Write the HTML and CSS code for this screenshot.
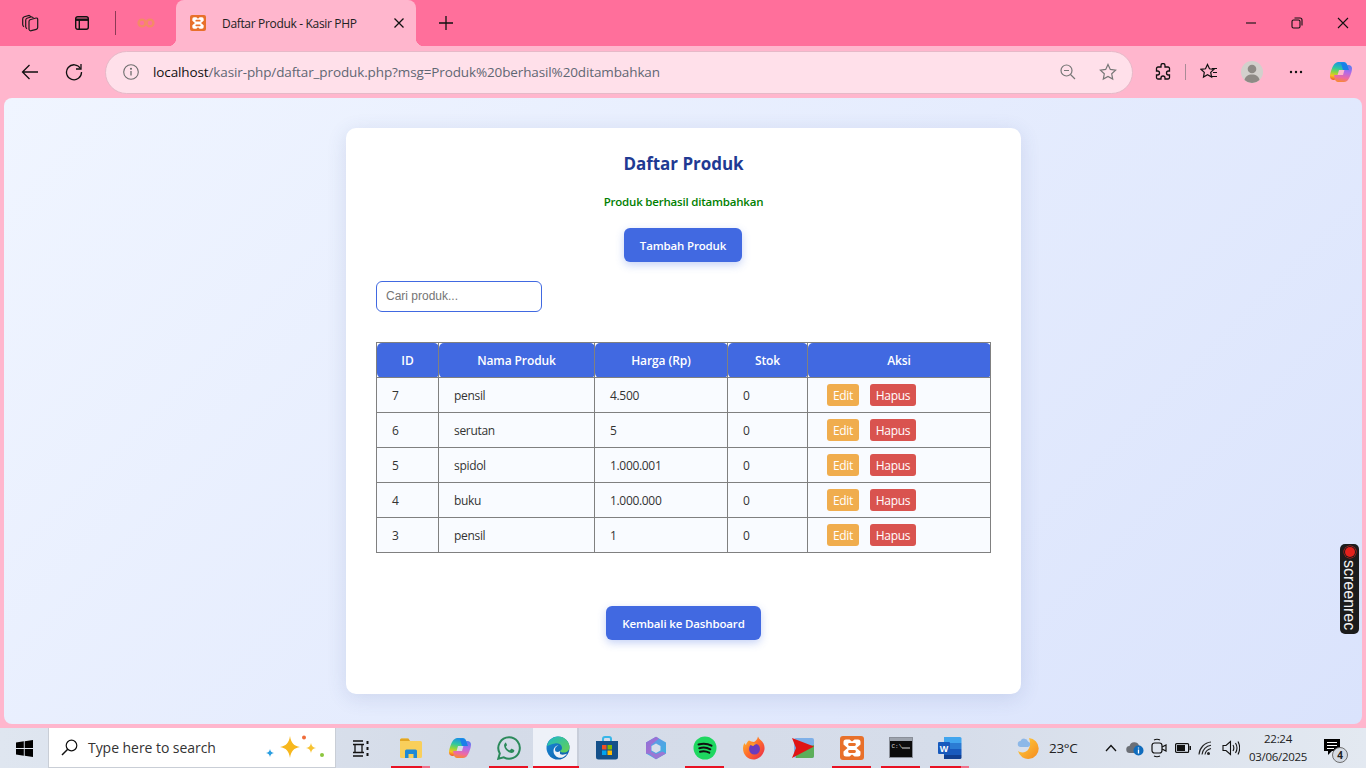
FILE: index.html
```html
<!DOCTYPE html>
<html lang="id">
<head>
<meta charset="utf-8">
<title>Daftar Produk - Kasir PHP</title>
<link rel="stylesheet" href="styles.css">
</head>
<body>
<div class="tabbar">
  <span class="slot s-coll"><svg width="20" height="20" viewBox="0 0 20 20" fill="none" stroke="#1a1a1a" stroke-width="1.200"><path d="M11 3.800L9 2.300 4.300 3.700Q2.700 4.300 2.700 6v5.500q0 1.500 1.300 2.300"/><path d="M13.500 4.800L11.500 3.800 7 5.300Q5.700 5.800 5.700 7.200v6.300q0 1.500 1.300 2.200"/><path d="M10 6.800l6-1.800q1.700-.2 1.700 1.500v8q0 1.400-1.400 1.800l-5 1.400q-1.800.4-2.300-1.300V8.500q0-1.200 1-1.700z"/></svg></span>
  <span class="slot s-vert"><svg width="16" height="16" viewBox="0 0 16 16" fill="none" stroke="#111" stroke-width="1.400"><rect x="1.700" y="1.700" width="12.600" height="12.600" rx="2"/><path d="M1.700 4.700h12.600" stroke-width="2.400"/><path d="M5.300 5v9"/></svg></span>
  <span class="tabsep"></span>
  <span class="slot s-inactive"><svg width="18" height="10" viewBox="0 0 18 10" fill="none" stroke="#f58a66" stroke-width="2.400"><circle cx="5" cy="5" r="3.400"/><circle cx="13" cy="5" r="3.400"/></svg></span>
  <div class="tab">
    <svg class="favicon" width="16" height="16" viewBox="0 0 24 24"><rect width="24" height="24" rx="3" fill="#e8702a"/><path d="M6 3.500h3.500L12 5.500l2.500-2H18A2.500 2.500 0 0 1 20.500 6v2.500L16.500 12l4 3.500V18a2.500 2.500 0 0 1-2.500 2.500h-3.500l-2.500-2-2.500 2H6A2.500 2.500 0 0 1 3.500 18v-2.500l4-3.500-4-3.500V6A2.500 2.500 0 0 1 6 3.500z" fill="#fff"/><path d="M9.500 8.500h5M9.500 15.500h5" stroke="#e8702a" stroke-width="2.800" stroke-linecap="round"/></svg>
    <span class="tabtitle">Daftar Produk - Kasir PHP</span>
    <svg class="tabclose" width="12" height="12" viewBox="0 0 12 12" stroke="#111" stroke-width="1.300"><path d="M1.500 1.500l9 9M10.500 1.500l-9 9"/></svg>
  </div>
  <span class="slot s-plus"><svg width="16" height="16" viewBox="0 0 16 16" stroke="#111" stroke-width="1.300"><path d="M8 1v14M1 8h14"/></svg></span>
  <span class="spacer"></span>
  <span class="slot s-win"><svg width="12" height="12" viewBox="0 0 12 12" stroke="#111" stroke-width="1.100"><path d="M1 6h10"/></svg></span>
  <span class="slot s-win"><svg width="12" height="12" viewBox="0 0 12 12" fill="none" stroke="#111" stroke-width="1.100"><rect x="1" y="3" width="8" height="8" rx="1.500"/><path d="M3.500 1h5.500a2 2 0 0 1 2 2v5.500"/></svg></span>
  <span class="slot s-win"><svg width="12" height="12" viewBox="0 0 12 12" stroke="#111" stroke-width="1.100"><path d="M1 1l10 10M11 1L1 11"/></svg></span>
</div>
<div class="toolbar">
  <span class="slot t-back"><svg width="18" height="18" viewBox="0 0 18 18" fill="none" stroke="#111" stroke-width="1.300"><path d="M17 9H1.500M8.500 2L1.500 9l7 7"/></svg></span>
  <span class="slot t-reload"><svg width="18" height="18" viewBox="0 0 18 18" fill="none" stroke="#111" stroke-width="1.300"><path d="M15.500 5.500A7.500 7.500 0 1 0 16.500 9"/><path d="M16 1v5h-5"/></svg></span>
  <div class="address">
    <svg class="info" width="16" height="16" viewBox="0 0 16 16" fill="none" stroke="#6e6e6e" stroke-width="1.100"><circle cx="8" cy="8" r="7.300"/><path d="M8 7v4.500" stroke-width="1.300"/><circle cx="8" cy="4.700" r=".5" fill="#6e6e6e"/></svg>
    <span class="url"><span class="host">localhost</span>/kasir-php/daftar_produk.php?msg=Produk%20berhasil%20ditambahkan</span>
    <span class="spacer"></span>
    <svg class="a-zoom" width="16" height="16" viewBox="0 0 16 16" fill="none" stroke="#777" stroke-width="1.200"><circle cx="6.500" cy="6.500" r="5.500"/><path d="M10.500 10.500L15 15M4 6.500h5"/></svg>
    <svg class="a-star" width="18" height="18" viewBox="0 0 18 18" fill="none" stroke="#777" stroke-width="1.200"><path d="M9 1.500l2.300 4.900 5.300.7-3.900 3.700 1 5.300L9 13.500l-4.700 2.600 1-5.300L1.400 7.100l5.300-.7z"/></svg>
  </div>
  <span class="slot t-ext"><svg width="18" height="18" viewBox="0 0 18 18" fill="none" stroke="#111" stroke-width="1.300"><path d="M7 2.500a2 2 0 0 1 4 0V4h3a1.500 1.500 0 0 1 1.500 1.500V8h-1a2 2 0 0 0 0 4h1v2.500A1.500 1.500 0 0 1 14 16h-3v-1a2 2 0 0 0-4 0v1H4a1.500 1.500 0 0 1-1.500-1.500V12h1a2 2 0 0 0 0-4h-1V5.500A1.500 1.500 0 0 1 4 4h3z"/></svg></span>
  <span class="toolsep"></span>
  <span class="slot t-fav"><svg width="18" height="18" viewBox="0 0 18 18" fill="none" stroke="#111" stroke-width="1.200"><path d="M7.500 1.500l2 4.300 4.500.5-3.300 3.100.9 4.600-4.100-2.300-4 2.300.8-4.600L1 6.300l4.500-.5z"/><path d="M12 5.500h5M13 9.500h4M12 13.500h5"/></svg></span>
  <span class="slot t-avatar"><svg width="22" height="22" viewBox="0 0 22 22"><circle cx="11" cy="11" r="11" fill="#d3d0cc"/><circle cx="11" cy="8" r="4.300" fill="#8e8a85"/><path d="M3.500 19c.5-3.500 3.500-5.500 7.500-5.500s7 2 7.500 5.500a11 11 0 0 1-15 0z" fill="#8e8a85"/></svg></span>
  <span class="slot t-dots"><svg width="14" height="4" viewBox="0 0 14 4" fill="#111"><circle cx="2" cy="2" r="1.200"/><circle cx="7" cy="2" r="1.200"/><circle cx="12" cy="2" r="1.200"/></svg></span>
  <span class="slot t-copilot"><svg width="24" height="24" viewBox="0 0 24 24"><defs><linearGradient id="cpa" x1=".5" y1="0" x2=".3" y2="1"><stop offset="0" stop-color="#1a8fe8"/><stop offset=".35" stop-color="#2fc7a0"/><stop offset=".6" stop-color="#8ed63e"/><stop offset=".8" stop-color="#f9c31f"/><stop offset="1" stop-color="#f2602e"/></linearGradient><linearGradient id="cpb" x1=".6" y1="0" x2=".4" y2="1"><stop offset="0" stop-color="#5a7cf0"/><stop offset=".4" stop-color="#b36ae8"/><stop offset=".75" stop-color="#f06aa0"/><stop offset="1" stop-color="#f78a35"/></linearGradient></defs><path d="M9 2h6c1.500 0 2.500 1 3 2.500L20 10H10L8 17c-.4 1.500-1.500 3-3.500 3C2.500 20 1 18.500 1 16.500c0-4 3-12 5-13C7 2.500 8 2 9 2z" fill="url(#cpa)"/><path d="M15 22H9c-1.500 0-2.500-1-3-2.500L5 15h9l2-7c.4-1.500 1.500-3 3.500-3C21.500 5 23 6.500 23 8.500c0 4-3 11-5 12.500-1 .7-2 1-3 1z" fill="url(#cpb)"/><path d="M12 3h3l3 1.500 2 5.500h-6z" fill="#1b7fe8"/></svg></span>
</div>
<main class="content">
  <section class="card">
    <h2 class="title">Daftar Produk</h2>
    <p class="msg">Produk berhasil ditambahkan</p>
    <div class="center"><a class="btn btn-add">Tambah Produk</a></div>
    <input class="search" type="text" placeholder="Cari produk...">
    <table class="table">
      <colgroup><col class="c1"><col class="c2"><col class="c3"><col class="c4"><col class="c5"></colgroup>
      <thead><tr><th>ID</th><th>Nama Produk</th><th>Harga (Rp)</th><th>Stok</th><th>Aksi</th></tr></thead>
      <tbody>
        <tr><td>7</td><td>pensil</td><td>4.500</td><td>0</td><td><div class="acts"><a class="act edit">Edit</a><a class="act del">Hapus</a></div></td></tr>
        <tr><td>6</td><td>serutan</td><td>5</td><td>0</td><td><div class="acts"><a class="act edit">Edit</a><a class="act del">Hapus</a></div></td></tr>
        <tr><td>5</td><td>spidol</td><td>1.000.001</td><td>0</td><td><div class="acts"><a class="act edit">Edit</a><a class="act del">Hapus</a></div></td></tr>
        <tr><td>4</td><td>buku</td><td>1.000.000</td><td>0</td><td><div class="acts"><a class="act edit">Edit</a><a class="act del">Hapus</a></div></td></tr>
        <tr><td>3</td><td>pensil</td><td>1</td><td>0</td><td><div class="acts"><a class="act edit">Edit</a><a class="act del">Hapus</a></div></td></tr>
      </tbody>
    </table>
    <div class="center back"><a class="btn btn-back">Kembali ke Dashboard</a></div>
  </section>
  <div class="screenrec"><span class="recdot"></span><span class="rectext">screenrec</span></div>
</main>
<footer class="taskbar">
  <span class="tb-start"><svg width="17" height="17" viewBox="0 0 17 17" fill="#000"><path d="M0 2.400L7.800 1.300V8H0zM8.700 1.200L17 0v8H8.700zM0 9h7.800v6.700L0 14.600zM8.700 9H17v8l-8.300-1.200z"/></svg></span>
  <div class="searchbox">
    <svg width="17" height="17" viewBox="0 0 17 17" fill="none" stroke="#111" stroke-width="1.200"><circle cx="10.500" cy="6.500" r="5.300"/><path d="M6.700 10.300L1 16" stroke-width="1.500"/></svg>
    <span class="searchtext">Type here to search</span>
    <span class="spacer"></span>
    <svg width="62" height="26" viewBox="0 0 62 26"><path d="M26 1c1 7 4 10 10 11-6 1-9 4-10 11-1-7-4-10-10-11 6-1 9-4 10-11z" fill="#f7b71d"/><path d="M47 8c.5 3 2 4.500 5 5-3 .5-4.500 2-5 5-.5-3-2-4.500-5-5 3-.5 4.500-2 5-5z" fill="#f7c331"/><circle cx="40" cy="2.500" r="2" fill="#ef6c3a"/><circle cx="58" cy="20" r="2" fill="#8cc63f"/><path d="M6 14c.4 2.500 1.500 3.500 4 4-2.500.5-3.600 1.500-4 4-.4-2.500-1.500-3.500-4-4 2.500-.5 3.600-1.500 4-4z" fill="#2a9ee0"/></svg>
  </div>
  <span class="tb first"><svg width="18" height="17" viewBox="0 0 18 17" fill="none" stroke="#111" stroke-width="1.300"><path d="M1 1h10M1 16h10M3 4.500h7v8H3zM1 4.500h11M1 12.500h11"/><path d="M15.500 1v3M15.500 7v3M15.500 13v3" stroke-width="2"/></svg></span>
  <span class="tb run part"><svg width="22" height="20" viewBox="0 0 22 20"><path d="M0 2a1.500 1.500 0 0 1 1.500-1.500h6L10 3h10.500A1.500 1.500 0 0 1 22 4.500v14a1.500 1.500 0 0 1-1.500 1.500h-19A1.500 1.500 0 0 1 0 18.500z" fill="#f9cf5b"/><path d="M0 3h10l-1.500-2.500h-7A1.500 1.500 0 0 0 0 2z" fill="#e2a523"/><path d="M5 20v-7a1.500 1.500 0 0 1 1.500-1.500h9A1.500 1.500 0 0 1 17 13v7h-3.500v-4h-5v4z" fill="#1f8ad6"/></svg></span>
  <span class="tb"><svg width="24" height="24" viewBox="0 0 24 24"><path d="M9 2h6c1.500 0 2.500 1 3 2.500L20 10H10L8 17c-.4 1.500-1.500 3-3.500 3C2.500 20 1 18.500 1 16.500c0-4 3-12 5-13C7 2.500 8 2 9 2z" fill="url(#cpa)"/><path d="M15 22H9c-1.500 0-2.500-1-3-2.500L5 15h9l2-7c.4-1.500 1.500-3 3.500-3C21.500 5 23 6.500 23 8.500c0 4-3 11-5 12.500-1 .7-2 1-3 1z" fill="url(#cpb)"/><path d="M12 3h3l3 1.500 2 5.500h-6z" fill="#1b7fe8"/></svg></span>
  <span class="tb run"><svg width="24" height="24" viewBox="0 0 24 24"><path d="M12 1.300A10.700 10.700 0 0 0 2.800 17.400L1.300 22.700l5.500-1.400A10.700 10.700 0 1 0 12 1.300z" fill="none" stroke="#2b8a5b" stroke-width="2"/><path d="M8.700 6.800c-.8.300-1.800 1.500-1.600 3 .4 3.300 3.800 6.800 7.200 7.200 1.500.1 2.700-.9 2.900-1.700.2-.7.100-1.200-.1-1.400l-2.200-1.100c-.4-.1-.6 0-.9.300l-.8 1c-.3.200-.5.200-.8.100-1.400-.6-2.700-1.800-3.400-3.200-.1-.3 0-.5.200-.7l.6-.8c.2-.3.200-.5.100-.8l-.9-2c-.2-.3-.7-.4-1.300-.2z" fill="#2b8a5b"/></svg></span>
  <span class="tb run active"><svg width="24" height="24" viewBox="0 0 24 24"><defs><linearGradient id="eda" x1="0" y1="0" x2="1" y2="1"><stop offset="0" stop-color="#1bb8c9"/><stop offset="1" stop-color="#67d24f"/></linearGradient><linearGradient id="edb" x1="0" y1="0" x2="1" y2="1"><stop offset="0" stop-color="#1b8cd8"/><stop offset="1" stop-color="#0c5aa6"/></linearGradient></defs><circle cx="12" cy="12" r="11.500" fill="url(#edb)"/><path d="M1 10C2.500 4 7 .5 12 .5c6.500 0 11.500 5 11.500 10.500 0 3.500-2.500 5.500-5.500 5.500-2 0-3.500-.5-4-1.500 2-1 2.500-3 1.500-5C14.500 8 12 7 9 7.500 5.500 8 2.500 9.500 1 10z" fill="url(#eda)"/><path d="M14 15c-1.500 1.500-5 1.500-5-1.500 0-2 1.500-3.500 3.500-4-2.500 0-5 2-5 5.500 0 4.500 4.500 8 9 6.500 2-.7 3.800-2.300 4.500-4-1.500 1-4.500 1.500-6.500.8-.8-.3-.5-2-.5-2.800z" fill="#eef1f8"/></svg></span>
  <span class="tb"><svg width="24" height="24" viewBox="0 0 24 24"><path d="M8 5V3a2 2 0 0 1 2-2h4a2 2 0 0 1 2 2v2" fill="none" stroke="#38b6e8" stroke-width="2"/><path d="M1 5h22v16a2.500 2.500 0 0 1-2.500 2.500h-17A2.500 2.500 0 0 1 1 21z" fill="#14508a"/><rect x="7" y="9" width="4.500" height="4.500" fill="#f25022"/><rect x="12.500" y="9" width="4.500" height="4.500" fill="#7fba00"/><rect x="7" y="14.500" width="4.500" height="4.500" fill="#00a4ef"/><rect x="12.500" y="14.500" width="4.500" height="4.500" fill="#ffb900"/></svg></span>
  <span class="tb"><svg width="24" height="24" viewBox="0 0 24 24"><defs><linearGradient id="mfa" x1="0" y1="0" x2="1" y2="1"><stop offset="0" stop-color="#6f8fe8"/><stop offset="1" stop-color="#38b5e0"/></linearGradient><linearGradient id="mfb" x1="0" y1="0" x2="1" y2="1"><stop offset="0" stop-color="#8a72d8"/><stop offset="1" stop-color="#b36fd0"/></linearGradient></defs><path d="M12 .8l10 5.700v11L12 23.200 2 17.500v-11z" fill="url(#mfa)"/><path d="M2 6.500L12 .8l3 1.800L7 9v9l-5-.5z" fill="url(#mfb)"/><path d="M12 23.200l10-5.700-3.500-2L12 18l-5-2.500-3 1.500z" fill="#9a78d4"/><path d="M12 7.500l4.500 2.500v4.500L12 17l-4.500-2.500V10z" fill="#d8deea"/></svg></span>
  <span class="tb run"><svg width="24" height="24" viewBox="0 0 24 24"><circle cx="12" cy="12" r="11.500" fill="#1ed760"/><path d="M5.500 8.500c4.500-1.300 9-1 13 1.200M6.300 12.200c3.800-1 7.800-.7 11 1.100M7 15.700c3.200-.8 6.400-.6 9.300 1" fill="none" stroke="#111" stroke-width="2" stroke-linecap="round"/></svg></span>
  <span class="tb"><svg width="24" height="24" viewBox="0 0 24 24"><defs><linearGradient id="ffa" x1="0" y1="0" x2="1" y2="1"><stop offset="0" stop-color="#ffc52e"/><stop offset=".5" stop-color="#ff6a2b"/><stop offset="1" stop-color="#e8264f"/></linearGradient></defs><path d="M16 .5c1 3 4 4 5.500 7 1.500 3 1.500 7-.5 10-2 3.500-5.500 6-9.500 6C6 23.500 1 19 1 12.500c0-2 .5-4 1.500-5.500.3 1 .8 1.500 1.500 2 .5-2 1.500-3.500 3-4.500 1.500 1 3 1 5 1.500 1.500-1 3.500-2.500 4-5.500z" fill="url(#ffa)"/><circle cx="12.500" cy="13" r="5.500" fill="#6b3bbd"/><path d="M8 8c2-1.500 5-1.500 7 0-2 0-3 1-3.500 2-1 0-2.500-.5-3.500-2z" fill="#ff9a2b"/></svg></span>
  <span class="tb"><svg width="24" height="22" viewBox="0 0 24 22"><rect x="3" y="1" width="20" height="20" rx="2" fill="#7fb0e8"/><path d="M5 12l18-4v11a2 2 0 0 1-2 2H5z" fill="#5cae5a"/><path d="M1 1l22 8.500L1 21l4-10z" fill="#e01515"/></svg></span>
  <span class="tb run"><svg width="24" height="24" viewBox="0 0 24 24"><rect width="24" height="24" rx="3" fill="#e8702a"/><path d="M6 3.500h3.500L12 5.500l2.500-2H18A2.500 2.500 0 0 1 20.500 6v2.500L16.500 12l4 3.500V18a2.500 2.500 0 0 1-2.500 2.500h-3.500l-2.500-2-2.500 2H6A2.500 2.500 0 0 1 3.500 18v-2.500l4-3.500-4-3.500V6A2.500 2.500 0 0 1 6 3.500z" fill="#fff"/><path d="M9.500 8.500h5M9.500 15.500h5" stroke="#e8702a" stroke-width="2.800" stroke-linecap="round"/></svg></span>
  <span class="tb run"><svg width="24" height="22" viewBox="0 0 24 22"><rect x=".5" y=".5" width="23" height="20" fill="#0c0c0c" stroke="#8a8f99"/><rect x="1" y="1" width="22" height="3" fill="#9da3ad"/><text x="2.500" y="11" class="cmdtext">C:\</text><path d="M13 11h8" stroke="#ddd" stroke-width="1"/></svg></span>
  <span class="tb run part"><svg width="24" height="24" viewBox="0 0 24 24"><path d="M6 1h16a1.500 1.500 0 0 1 1.500 1.500V7H6z" fill="#41a5ee"/><rect x="6" y="7" width="17.500" height="6" fill="#2b7cd3"/><rect x="6" y="13" width="17.500" height="6" fill="#185abd"/><path d="M6 19h17.500v2.500A1.500 1.500 0 0 1 22 23H6z" fill="#103f91"/><rect y="6" width="12" height="12" rx="1" fill="#185abd"/><text x="6" y="15.500" class="wordtext">W</text></svg></span>
  <span class="spacer"></span>
  <span class="tray t-weather"><svg width="24" height="24" viewBox="0 0 24 24"><defs><linearGradient id="mn" x1="0" y1="0" x2="1" y2="1"><stop offset="0" stop-color="#ffd23f"/><stop offset="1" stop-color="#f58a1f"/></linearGradient></defs><path d="M13 2a10.500 10.500 0 1 1-11 13c2 1.500 5 2 8 .5 4-2 5-8 3-13.500z" fill="url(#mn)"/><path d="M5 11a3 3 0 0 1-.5-6A4 4 0 0 1 12 5.500 2.800 2.800 0 0 1 12 11z" fill="#8db8e8"/></svg></span>
  <span class="temp">23°C</span>
  <span class="tray t-chev"><svg width="12" height="8" viewBox="0 0 12 8" fill="none" stroke="#111" stroke-width="1.300"><path d="M1 7l5-5.500L11 7"/></svg></span>
  <span class="tray t-icon"><svg width="18" height="16" viewBox="0 0 18 16"><path d="M4 13a3.500 3.500 0 0 1-.5-7A5 5 0 0 1 13 5.500 3.800 3.800 0 0 1 13 13z" fill="#6b6f76"/><circle cx="12.500" cy="10.500" r="5" fill="#0f6cbd"/><path d="M12.500 9.500v4M12.500 7.500v1" stroke="#fff" stroke-width="1.300"/></svg></span>
  <span class="tray t-icon"><svg width="18" height="20" viewBox="0 0 18 20" fill="none" stroke="#111" stroke-width="1.200"><rect x="2" y="5" width="10" height="10" rx="2.500"/><path d="M12 9l4-2v6l-4-2M4 2c2-1 4-1 6 0M4 18c2 1 4 1 6 0"/></svg></span>
  <span class="tray t-icon"><svg width="16" height="10" viewBox="0 0 16 10"><rect x=".6" y=".6" width="13" height="8.800" rx="1" fill="none" stroke="#111" stroke-width="1.200"/><rect x="2" y="2" width="8" height="6" fill="#111"/><rect x="14.500" y="3" width="1.500" height="4" fill="#111"/></svg></span>
  <span class="tray t-icon"><svg width="18" height="15" viewBox="0 0 18 15" fill="none" stroke="#222" stroke-width="1.100"><path d="M1 13.500C1.500 7 6.500 1.500 13 1M4 13.500C4.500 9 8 5 13 4.300M7 13.500c.3-2.600 2.500-5 6-6"/><circle cx="10.500" cy="12.500" r="1.500" fill="#222" stroke="none"/></svg></span>
  <span class="tray t-icon"><svg width="18" height="16" viewBox="0 0 18 16" fill="none" stroke="#111" stroke-width="1.100"><path d="M1 5.500h3L8.500 1.500v13L4 10.500H1zM11 5c1 1.800 1 4.200 0 6M13.500 3c1.800 3 1.800 7 0 10M16 1.500c2 3.800 2 9.200 0 13"/></svg></span>
  <div class="clock"><span>22:24</span><span>03/06/2025</span></div>
  <span class="notif"><svg width="18" height="17" viewBox="0 0 18 17"><path d="M0 0h16v12H8l-4 4v-4H0z" fill="#000"/><path d="M3 3.500h10M3 6.500h10M3 9.500h7" stroke="#fff" stroke-width="1"/></svg><span class="badge">4</span></span>
</footer>
</body>
</html>
```
FILE: styles.css
```css
* { box-sizing: border-box; }
html, body { margin: 0; padding: 0; height: 768px; overflow: hidden; }
body {
  width: 1366px;
  display: flex;
  flex-direction: column;
  font-family: "Open Sans", "Noto Sans", sans-serif;
  background: #ffb6cd;
  color: #1a1a1a;
}
.slot { display: flex; align-items: center; justify-content: center; flex: none; }
.spacer { flex: 1; }

/* tab strip */
.tabbar { height: 46px; flex: none; display: flex; align-items: center; background: #ff6f9b; }
.s-coll { width: 60px; height: 46px; }
.s-vert { width: 44px; height: 46px; }
.tabsep { width: 1px; height: 24px; background: #8c3a55; margin: 0 0 0 11px; flex: none; }
.s-inactive { width: 60px; height: 46px; }
.tab {
  position: relative; width: 240px; height: 46px; flex: none;
  display: flex; align-items: center; background: #ffb6cd;
  border-radius: 8px 8px 0 0; padding: 0 0 0 14px;
}
.tab::before, .tab::after {
  content: ""; position: absolute; bottom: 0; width: 8px; height: 8px;
}
.tab::before { left: -8px; background: radial-gradient(circle at 0 0, #ff6f9b 8px, #ffb6cd 8.500px); }
.tab::after { right: -8px; background: radial-gradient(circle at 100% 0, #ff6f9b 8px, #ffb6cd 8.500px); }
.favicon { flex: none; }
.tabtitle { margin-left: 16px; font-size: 12px; width: 165px; white-space: nowrap; letter-spacing: -.33px; color: #222; }
.tabclose { margin-left: 6px; }
.s-plus { width: 60px; height: 46px; }
.s-win { width: 46px; height: 46px; }

/* toolbar */
.toolbar { height: 52px; flex: none; display: flex; align-items: center; background: #ffb6cd; }
.t-back { width: 52px; margin-left: 4px; }
.t-reload { width: 36px; }
.address {
  width: 1028px; height: 43px; margin-left: 13px; flex: none;
  display: flex; align-items: center;
  background: #ffe0ea; border: 1px solid #e6b9c8; border-radius: 22px; padding: 0 15px 0 17px;
}
.info { flex: none; }
.url { margin-left: 14px; font-size: 13.500px; white-space: nowrap; color: #5f6773; letter-spacing: -.12px; }
.host { color: #111; }
.a-zoom { margin-right: 23px; }
.t-ext { width: 36px; margin-left: 12px; }
.toolsep { width: 1px; height: 16px; background: #a98b96; margin: 0 6px 0 4px; flex: none; }
.t-fav { width: 34px; }
.t-avatar { width: 50px; margin-left: 1px; }
.t-dots { width: 38px; }
.t-copilot { width: 50px; margin-left: 1px; }

/* page */
.content {
  position: relative; flex: none; height: 626px; margin: 0 4px; padding-top: 30px;
  border-radius: 8px;
  background: linear-gradient(135deg, #f0f5ff 0%, #dae3fc 100%);
  overflow: hidden;
}
.card {
  width: 675px; height: 566px; margin: 0 auto 0 342px; padding: 24px 30px 0;
  background: #fff; border-radius: 10px;
  box-shadow: 0 4px 20px rgba(60, 80, 140, .14);
}
.title { margin: 0; height: 24px; line-height: 24px; text-align: center; font-size: 17px; font-weight: 700; color: #1f3a93; letter-spacing: -.03px; }
.msg { margin: 17px 0 0; height: 17px; line-height: 17px; text-align: center; font-size: 11.500px; font-weight: 600; color: #008000; letter-spacing: -.2px; }
.center { display: flex; justify-content: center; margin-top: 18px; }
.back { margin-top: 53px; }
.btn {
  display: flex; align-items: center; justify-content: center; height: 34px;
  background: #4169e1; color: #fff; border-radius: 6px; font-size: 11.500px; font-weight: 600;
  box-shadow: 0 3px 8px rgba(65, 105, 225, .3); letter-spacing: -.15px;
}
.btn-add { width: 118px; margin-right: 1px; }
.btn-back { width: 155px; }
.search {
  display: block; width: 166px; height: 31px; margin-top: 19px; padding: 0 9px 2px;
  border: 1px solid #4169e1; border-radius: 6px; font-family: "Liberation Sans", sans-serif; font-size: 12px; outline: none; background: #fff;
}
.search::placeholder { color: #757575; opacity: 1; }
.table { width: 614px; margin-top: 30px; border-collapse: collapse; table-layout: fixed; font-size: 12px; }
.c1 { width: 62px; } .c2 { width: 156px; } .c3 { width: 133px; } .c4 { width: 80px; } .c5 { width: 183px; }
.table th {
  height: 35px; padding: 0 15px; border: 1px solid #808080; background: #4169e1; color: #fff;
  font-weight: 600; font-size: 12px; text-align: center; border-radius: 5px; letter-spacing: -.1px;
}
.table td { height: 35px; padding: 0 15px; border: 1px solid #808080; background: #f9fbff; color: #333; letter-spacing: -.32px; }
.acts { display: flex; gap: 11px; margin-left: 4px; }
.act { height: 22px; display: flex; align-items: center; justify-content: center; border-radius: 3px; color: #fff; font-size: 12px; }
.edit { width: 32px; background: #f0ad4e; }
.del { width: 46px; background: #d9534f; }

.screenrec {
  position: absolute; left: 1336px; top: 446px; width: 19px; height: 90px;
  background: #1c1c1c; border-radius: 5px;
  display: flex; flex-direction: column; align-items: center; padding-top: 3px;
}
.recdot { width: 10px; height: 10px; border-radius: 50%; background: #e3211c; box-shadow: 0 0 0 1px #1c1c1c, 0 0 0 1.500px #e3211c; flex: none; }
.rectext { writing-mode: vertical-rl; color: #f2f2f2; font-family: "Liberation Sans", sans-serif; font-size: 16px; line-height: 17px; margin-top: 3px; }

/* taskbar */
.taskbar {
  flex: none; display: flex; align-items: stretch; height: 40px; margin-top: 4px; padding-right: 10px;
  background: linear-gradient(90deg, #dfe6f0 0%, #d4dbe8 35%, #d6ddea 70%, #e3e9f1 100%);
}
.tb-start { width: 48px; flex: none; display: flex; align-items: center; justify-content: center; }
.searchbox {
  width: 288px; flex: none; display: flex; align-items: center; background: #fff;
  border: 1px solid #c9ced6; border-top: 0; padding: 0 9px 0 12px;
}
.searchtext { margin-left: 10px; font-size: 14px; color: #333; letter-spacing: -.05px; white-space: nowrap; }
.tb { position: relative; width: 49px; flex: none; display: flex; align-items: center; justify-content: center; }
.first { width: 50px; }
.run::after { content: ""; position: absolute; left: 5px; right: 5px; bottom: 0; height: 2px; background: #e81123; }
.part::after { background: linear-gradient(90deg, #e81123 80%, #f0708a 80%); }
.active { background: linear-gradient(90deg, #eef1f8 44px, #c8ceda 44px, #c8ceda 46px, transparent 46px); }
.active::after { left: 0; right: 3px; }
.cmdtext { font-family: "Liberation Mono", monospace; font-size: 6px; fill: #ddd; }
.wordtext { font-family: "Liberation Sans", sans-serif; font-size: 9px; font-weight: 700; fill: #fff; text-anchor: middle; }
.tray { flex: none; display: flex; align-items: center; justify-content: center; }
.t-weather { width: 26px; }
.temp { width: 42px; margin-left: 8px; display: flex; align-items: center; font-size: 13.500px; color: #222; letter-spacing: -.3px; }
.t-chev { width: 24px; margin-left: 8px; }
.t-icon { width: 24px; }
.clock {
  width: 66px; margin-left: 2px; flex: none; display: flex; flex-direction: column; align-items: center; justify-content: center;
  font-size: 11.500px; line-height: 18px; color: #222; letter-spacing: -.3px; white-space: nowrap;
}
.notif { position: relative; width: 46px; margin-left: -1px; flex: none; display: flex; align-items: center; justify-content: center; padding-bottom: 2px; }
.badge {
  position: absolute; left: 22px; top: 19px; width: 16px; height: 16px; border-radius: 50%;
  background: #d4dae3; border: 1px solid #6e6e6e; color: #222; font-size: 10px; font-weight: 700;
  display: flex; align-items: center; justify-content: center;
}
```
